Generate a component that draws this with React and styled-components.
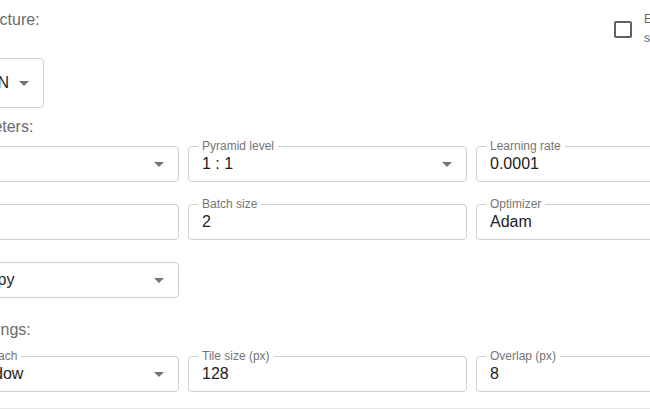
import React from 'react';
import styled, { createGlobalStyle } from 'styled-components';

const GlobalStyle = createGlobalStyle`
  html, body {
    margin: 0;
    background: #fff;
    overflow: hidden;
  }
  body {
    font-family: "Liberation Sans", Arial, sans-serif;
  }
`;

const rows = [
  [
    { label: 'Encoder', value: 'resnet34', select: true },
    { label: 'Pyramid level', value: '1 : 1', select: true },
    { label: 'Learning rate', value: '0.0001' },
  ],
  [
    { label: 'Epochs', value: '100' },
    { label: 'Batch size', value: '2' },
    { label: 'Optimizer', value: 'Adam' },
  ],
  [{ label: 'Loss', value: 'Cross-entropy', select: true }],
];

const inference = [
  { label: 'Inference approach', value: 'Moving window', select: true },
  { label: 'Tile size (px)', value: '128' },
  { label: 'Overlap (px)', value: '8' },
];

function ArrowDrop() {
  return (
    <Arrow viewBox="0 0 24 24">
      <path d="M7 10l5 5 5-5z" />
    </Arrow>
  );
}

function Field({ label, value, select }) {
  return (
    <FieldBox>
      {label && <FieldLabel>{label}</FieldLabel>}
      <FieldValue>{value}</FieldValue>
      {select && <ArrowDrop />}
    </FieldBox>
  );
}

export default function App() {
  return (
    <>
      <GlobalStyle />
      <Page>
        <HeaderRow>
          <SectionTitle>Neural architecture:</SectionTitle>
          <CheckGroup>
            <CheckBox />
            <CheckLabel>Enable stain separation</CheckLabel>
          </CheckGroup>
        </HeaderRow>

        <ArchSelect>
          <FieldValue>Mask R-CNN</FieldValue>
          <ArrowDrop />
        </ArchSelect>

        <SectionTitle $top={7}>Model parameters:</SectionTitle>
        <FieldGrid $top={7}>
          {rows.flat().map((f, i) => (
            <Field key={i} {...f} />
          ))}
        </FieldGrid>

        <SectionTitle $top={20}>Inference settings:</SectionTitle>
        <FieldGrid $top={14}>
          {inference.map((f, i) => (
            <Field key={i} {...f} />
          ))}
        </FieldGrid>

        <Divider />
      </Page>
    </>
  );
}

const Page = styled.div`
  margin-left: -100px;
  width: 855px;
  padding-top: 8px;
  display: flex;
  flex-direction: column;
  align-items: flex-start;
`;

const HeaderRow = styled.div`
  display: flex;
  align-items: flex-start;
  width: 100%;
  height: 24px;
`;

const SectionTitle = styled.div`
  margin-top: ${(p) => p.$top || 0}px;
  font-size: 16px;
  line-height: 24px;
  color: #6b6b6b;
`;

const CheckGroup = styled.div`
  margin-left: auto;
  margin-top: 2px;
  width: 141px;
  display: flex;
  align-items: flex-start;
  gap: 12px;
`;

const CheckBox = styled.div`
  flex: none;
  margin-top: 11px;
  width: 18px;
  height: 17px;
  box-sizing: border-box;
  border: 2px solid #606060;
  border-radius: 2px;
`;

const CheckLabel = styled.div`
  width: 100px;
  font-size: 12px;
  line-height: 19px;
  color: #666;
`;

const ArchSelect = styled.div`
  margin-top: 26px;
  width: 144px;
  height: 50px;
  box-sizing: border-box;
  border: 1px solid #cfcfcf;
  border-radius: 4px;
  padding: 0 7px 0 14px;
  display: flex;
  align-items: center;
  justify-content: flex-end;
  gap: 3px;
`;

const FieldGrid = styled.div`
  margin-top: ${(p) => p.$top || 0}px;
  display: grid;
  grid-template-columns: repeat(3, 279px);
  grid-auto-rows: 36px;
  column-gap: 9px;
  row-gap: 22px;
`;

const FieldBox = styled.div`
  position: relative;
  box-sizing: border-box;
  height: 36px;
  border: 1px solid #cfcfcf;
  border-radius: 4px;
  padding: 0 7px 0 13px;
  display: flex;
  align-items: center;
  justify-content: space-between;
`;

const FieldLabel = styled.span`
  position: absolute;
  left: 9px;
  top: -8px;
  padding: 0 4px;
  background: #fff;
  font-size: 12px;
  line-height: 14px;
  color: #757575;
  white-space: nowrap;
`;

const FieldValue = styled.span`
  font-size: 16px;
  color: #222;
  white-space: nowrap;
`;

const Arrow = styled.svg`
  flex: none;
  width: 24px;
  height: 24px;
  fill: #757575;
`;

const Divider = styled.div`
  margin-top: 16px;
  align-self: stretch;
  border-top: 1px solid #e6e6e6;
`;
